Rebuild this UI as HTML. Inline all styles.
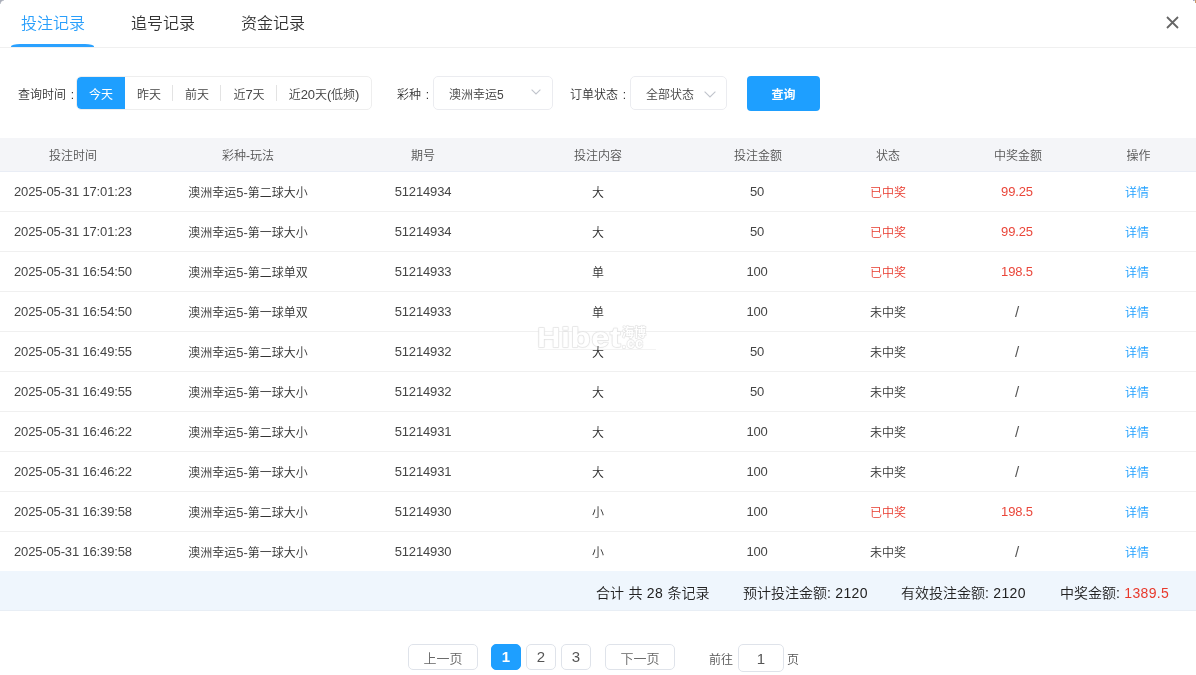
<!DOCTYPE html>
<html lang="zh-CN">
<head>
<meta charset="utf-8">
<title>投注记录</title>
<style>
*{box-sizing:border-box;margin:0;padding:0}
html,body{width:1196px;height:675px;overflow:hidden;background:#fff}
body{font-family:"Liberation Sans","Noto Sans CJK SC",sans-serif;font-size:13px;color:#333;position:relative}
#app{position:absolute;left:0;top:0;width:1196px;height:675px;overflow:hidden;will-change:transform}
.abs{position:absolute}
.corner-tl{left:0;top:0;width:4px;height:4px;background:radial-gradient(circle at 100% 100%,rgba(170,174,185,0) 2.8px,#aaaeb9 4px)}
.tabs{left:0;top:0;width:1196px;height:48px;border-bottom:1px solid #f0f0f0}
.tab{position:absolute;top:0;height:47px;line-height:48px;font-size:16px;font-weight:350;color:#333;white-space:nowrap}
.tab.on{color:#2a9ffb}
.tabline{left:11px;top:44.4px;width:83px;height:2.6px;border-radius:9px 9px 0 0/2.6px 2.6px 0 0;background:#2aa1ff}
.close{left:1166px;top:16px;width:13px;height:13px}
.lbl{top:78px;height:34px;line-height:35px;font-size:12px;font-weight:350;color:#333;white-space:nowrap;word-spacing:1.5px}
.grp{left:76px;top:76px;width:296px;height:34px;border:1px solid #eee;border-radius:5px;overflow:hidden;background:#fff}
.grp span{position:absolute;top:0;height:32px;line-height:36px;text-align:center;font-size:12px;font-weight:350;color:#444;white-space:nowrap}
.grp span.on{background:#1e9fff;color:#fff;border-radius:4px 0 0 4px;font-weight:400}
.grp b{font-weight:normal;font-size:13px;letter-spacing:-.15px}
.grp i{position:absolute;top:8px;width:1px;height:16px;background:#e3e3e3}
.sel{top:76px;height:34px;border:1px solid #ebecf0;border-radius:5px;line-height:37px;font-size:12px;font-weight:350;color:#444;white-space:nowrap}
.btn{left:747px;top:76px;width:73px;height:35px;background:#1e9fff;border-radius:4px;color:#fff;text-align:center;line-height:39px;font-size:12px;font-weight:bold}
table{position:absolute;left:0;top:138px;width:1202px;border-collapse:separate;border-spacing:0;table-layout:fixed}
th{height:34px;background:#f4f5f8;font-weight:350;color:#555;font-size:12px;text-align:center;padding-bottom:0;border-bottom:1px solid #e9edf5}
td{height:40px;border-bottom:1px solid #f0f0f0;text-align:center;font-size:12px;font-weight:350;color:#333;white-space:nowrap;padding-bottom:1px}
td.n,td b{font-size:13px;font-weight:normal;letter-spacing:-.15px;color:#444}
td.red.n{color:#ea463a}
td.sl{font-size:15px;color:#555;padding-bottom:0}
td.l{text-align:left;padding-left:14px}
th:nth-child(5),th:nth-child(7){padding-left:2px}
th:nth-child(8){padding-left:3px}
.up{position:relative;z-index:2}
.red{color:#e8392c}
.blue{color:#1e9fff}
.sum{left:0;top:571px;width:1196px;height:40px;background:#eff6fd;border-bottom:1px solid #e8eef5}
.sum span{position:absolute;top:0;line-height:44px;word-spacing:.5px;font-size:14px;font-weight:350;color:#222;white-space:nowrap}
.sum i{font-style:normal;letter-spacing:.35px}
.pg{top:644px;height:26px;border:1px solid #dfe3ea;border-radius:5px;text-align:center;line-height:23px;font-size:15px;color:#555;background:#fff}
.pg.t{font-size:13px;font-weight:350;color:#666;line-height:27px}
.pg.on{background:#1e9fff;border-color:#1e9fff;color:#fff;font-weight:bold}
.wm{z-index:1;left:537px;top:319px;width:120px;height:32px;white-space:nowrap;color:#fff;font-weight:bold;-webkit-text-stroke:1.3px #e9e9e9;paint-order:stroke fill;text-shadow:0 0 2px #dcdcdc}
.wm span{position:absolute;display:block}
</style>
</head>
<body><div id="app">
<div class="abs tabs"></div>
<div class="abs corner-tl"></div>
<div class="abs" style="left:1193px;top:0;width:1px;height:1px;background:#a9a3c7"></div>
<div class="abs" style="left:1194px;top:0;width:1px;height:1px;background:#b5c5c5"></div>
<div class="abs" style="left:1195px;top:0;width:1px;height:3px;background:#c99b6c"></div>
<div class="tab on" style="left:21px">投注记录</div>
<div class="tab" style="left:131px">追号记录</div>
<div class="tab" style="left:241px">资金记录</div>
<div class="abs tabline"></div>
<svg class="abs close" viewBox="0 0 13 13"><path d="M1 1L12 12M12 1L1 12" stroke="#666" stroke-width="1.8" fill="none"/></svg>

<div class="abs lbl" style="left:18px">查询时间 :</div>
<div class="abs grp">
<span class="on" style="left:0;width:48px">今天</span>
<span style="left:48px;width:48px">昨天</span><i style="left:95px"></i>
<span style="left:96px;width:48px">前天</span><i style="left:143px"></i>
<span style="left:144px;width:56px">近<b>7</b>天</span><i style="left:199px"></i>
<span style="left:200px;width:94px">近<b>20</b>天<b>(</b>低频<b>)</b></span>
</div>
<div class="abs lbl" style="left:397px">彩种 :</div>
<div class="abs sel" style="left:433px;width:120px;padding-left:15px">澳洲幸运5
<svg class="abs" style="left:97px;top:12px;width:10px;height:6px" viewBox="0 0 10 6"><path d="M0.6 0.6L5 5L9.4 0.6" stroke="#c0c4cc" stroke-width="1.1" fill="none"/></svg></div>
<div class="abs lbl" style="left:570px">订单状态 :</div>
<div class="abs sel" style="left:630px;width:97px;padding-left:15px">全部状态
<svg class="abs" style="left:73px;top:14px;width:12px;height:7px" viewBox="0 0 12 7"><path d="M0.6 0.6L6 6L11.4 0.6" stroke="#c0c4cc" stroke-width="1.1" fill="none"/></svg></div>
<div class="abs btn">查询</div>

<table>
<colgroup><col style="width:146px"><col style="width:204px"><col style="width:146px"><col style="width:204px"><col style="width:114px"><col style="width:148px"><col style="width:110px"><col style="width:130px"></colgroup>
<tr><th>投注时间</th><th>彩种-玩法</th><th>期号</th><th>投注内容</th><th>投注金额</th><th>状态</th><th>中奖金额</th><th>操作</th></tr>
<tr><td class="l n">2025-05-31 17:01:23</td><td>澳洲幸运<b>5-</b>第二球大小</td><td class="n">51214934</td><td>大</td><td class="n">50</td><td class="red">已中奖</td><td class="red n">99.25</td><td class="blue">详情</td></tr>
<tr><td class="l n">2025-05-31 17:01:23</td><td>澳洲幸运<b>5-</b>第一球大小</td><td class="n">51214934</td><td>大</td><td class="n">50</td><td class="red">已中奖</td><td class="red n">99.25</td><td class="blue">详情</td></tr>
<tr><td class="l n">2025-05-31 16:54:50</td><td>澳洲幸运<b>5-</b>第二球单双</td><td class="n">51214933</td><td>单</td><td class="n">100</td><td class="red">已中奖</td><td class="red n">198.5</td><td class="blue">详情</td></tr>
<tr><td class="l n">2025-05-31 16:54:50</td><td>澳洲幸运<b>5-</b>第一球单双</td><td class="n">51214933</td><td>单</td><td class="n">100</td><td>未中奖</td><td class="n sl">/</td><td class="blue">详情</td></tr>
<tr><td class="l n">2025-05-31 16:49:55</td><td>澳洲幸运<b>5-</b>第二球大小</td><td class="n">51214932</td><td><span class="up">大</span></td><td class="n">50</td><td>未中奖</td><td class="n sl">/</td><td class="blue">详情</td></tr>
<tr><td class="l n">2025-05-31 16:49:55</td><td>澳洲幸运<b>5-</b>第一球大小</td><td class="n">51214932</td><td>大</td><td class="n">50</td><td>未中奖</td><td class="n sl">/</td><td class="blue">详情</td></tr>
<tr><td class="l n">2025-05-31 16:46:22</td><td>澳洲幸运<b>5-</b>第二球大小</td><td class="n">51214931</td><td>大</td><td class="n">100</td><td>未中奖</td><td class="n sl">/</td><td class="blue">详情</td></tr>
<tr><td class="l n">2025-05-31 16:46:22</td><td>澳洲幸运<b>5-</b>第一球大小</td><td class="n">51214931</td><td>大</td><td class="n">100</td><td>未中奖</td><td class="n sl">/</td><td class="blue">详情</td></tr>
<tr><td class="l n">2025-05-31 16:39:58</td><td>澳洲幸运<b>5-</b>第二球大小</td><td class="n">51214930</td><td>小</td><td class="n">100</td><td class="red">已中奖</td><td class="red n">198.5</td><td class="blue">详情</td></tr>
<tr><td class="l n">2025-05-31 16:39:58</td><td>澳洲幸运<b>5-</b>第一球大小</td><td class="n">51214930</td><td>小</td><td class="n">100</td><td>未中奖</td><td class="n sl">/</td><td class="blue">详情</td></tr>
</table>

<div class="abs wm"><span style="left:0;top:4px;font-size:27px;line-height:30px;letter-spacing:.6px;transform:scaleX(1.2);transform-origin:0 0">Hibet</span><span style="left:85px;top:7px;font-size:12px;line-height:14px">海博</span><span style="left:85px;top:17px;font-size:14px;line-height:14px;letter-spacing:.8px">.cc</span><span style="left:1px;top:30px;width:118px;height:1px;background:#f3f3f3"></span></div>

<div class="abs sum">
<span style="left:596px">合计 共 <i>28</i> 条记录</span>
<span style="left:743px">预计投注金额: <i>2120</i></span>
<span style="left:901px">有效投注金额: <i>2120</i></span>
<span style="left:1060px">中奖金额: <i class="red">1389.5</i></span>
</div>

<div class="abs pg t" style="left:408px;width:70px">上一页</div>
<div class="abs pg on" style="left:491px;width:30px">1</div>
<div class="abs pg" style="left:526px;width:30px">2</div>
<div class="abs pg" style="left:561px;width:30px">3</div>
<div class="abs pg t" style="left:605px;width:70px">下一页</div>
<div class="abs" style="left:709px;top:644px;line-height:33px;font-size:12px;font-weight:350;color:#555">前往</div>
<div class="abs pg" style="left:738px;width:46px;height:28px;line-height:27px">1</div>
<div class="abs" style="left:787px;top:644px;line-height:33px;font-size:12px;font-weight:350;color:#555">页</div>
</div></body>
</html>
